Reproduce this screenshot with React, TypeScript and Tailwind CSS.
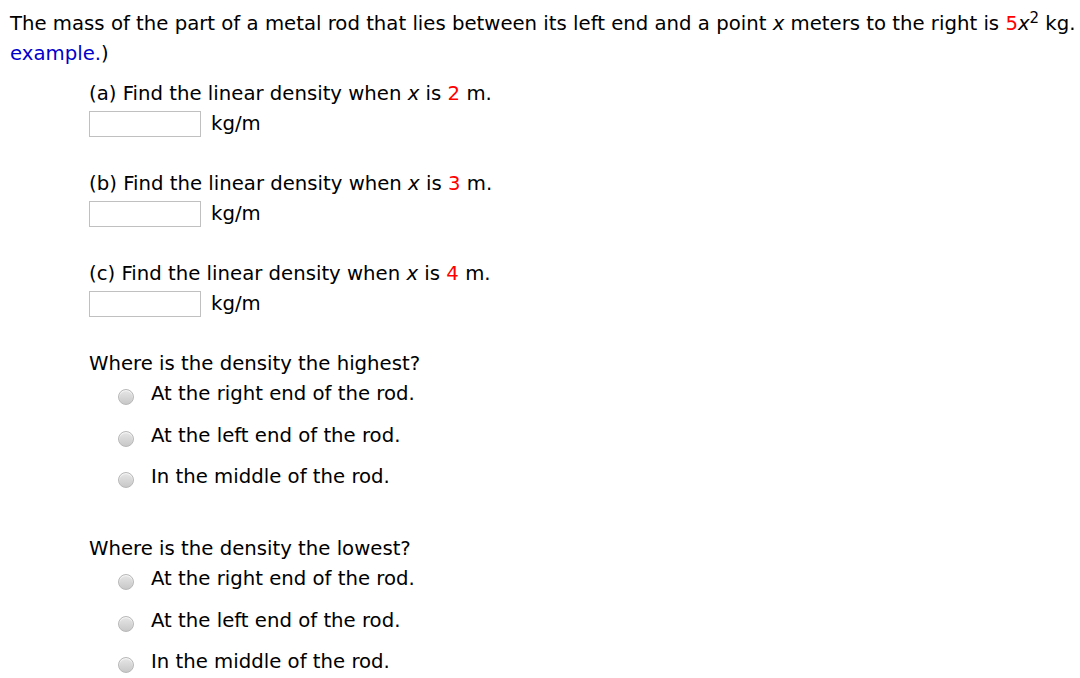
import React from "react";

const Radio = () => (
  <span className="inline-block w-[16px] h-[16px] rounded-full border border-[#b8b8b8] bg-gradient-to-b from-[#e6e6e6] to-[#c8c8c8] shadow-[inset_0_1px_1px_rgba(255,255,255,0.8)]" />
);

const Red = ({ children }: { children: React.ReactNode }) => (
  <span className="text-[#ff0000]">{children}</span>
);

const Part = ({ label, value, top }: { label: string; value: string; top: string }) => (
  <div className={top}>
    <div className="h-[30px] leading-[30px]">
      ({label}) Find the linear density when <i>x</i> is <Red>{value}</Red> m.
    </div>
    <div className="flex items-center h-[30px]">
      <div className="w-[112px] h-[26px] border border-[#c0c0c0] bg-white" />
      <span className="ml-[10px] leading-[30px]">kg/m</span>
    </div>
  </div>
);

const Options = () => (
  <div className="pl-[29px]">
    {["At the right end of the rod.", "At the left end of the rod.", "In the middle of the rod."].map((t, i) => (
      <div key={i} className={`flex items-center h-[30px] ${i === 0 ? "mt-0" : "mt-[11.5px]"}`}>
        <span className="mt-[6px] flex"><Radio /></span>
        <span className="ml-[17px] leading-[30px]">{t}</span>
      </div>
    ))}
  </div>
);

export default function App() {
  return (
    <div
      className="w-[1080px] h-[678px] overflow-hidden bg-white text-[#000] text-[19.7px] pl-[10px] pt-[9px]"
      style={{ fontFamily: "'DejaVu Sans', Verdana, sans-serif" }}
    >
      <div className="whitespace-nowrap h-[30px] leading-[30px]">
        The mass of the part of a metal rod that lies between its left end and a point <i>x</i> meters to the right is{" "}
        <Red>5</Red>
        <i>x</i>
        <sup className="text-[15px] relative top-[-0.5em]">2</sup> kg.
      </div>
      <div className="h-[30px] leading-[30px]">
        <span className="text-[#0000cc]">example.</span>)
      </div>
      <div className="pl-[79px]">
        <Part label="a" value="2" top="mt-[10px]" />
        <Part label="b" value="3" top="mt-[30px]" />
        <Part label="c" value="4" top="mt-[30px]" />
        <div className="mt-[30px] h-[30px] leading-[30px]">Where is the density the highest?</div>
        <Options />
        <div className="mt-[42px] h-[30px] leading-[30px]">Where is the density the lowest?</div>
        <Options />
      </div>
    </div>
  );
}
